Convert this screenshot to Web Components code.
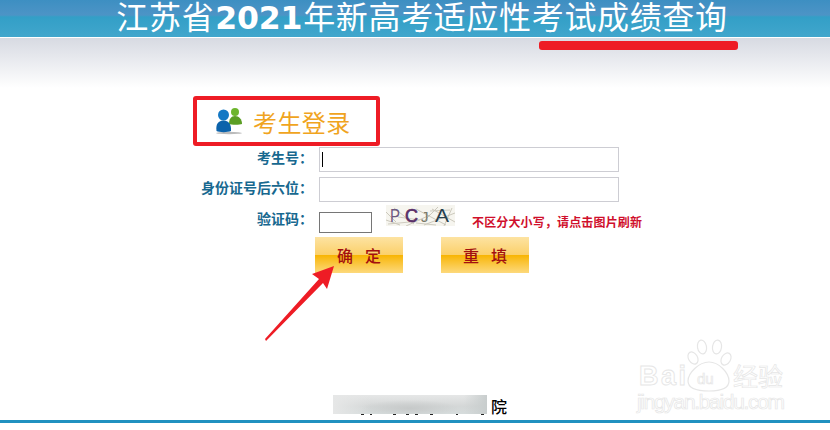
<!DOCTYPE html>
<html lang="zh">
<head>
<meta charset="utf-8">
<title>江苏省2021年新高考适应性考试成绩查询</title>
<style>
  html, body { margin: 0; padding: 0; background: #fff; }
  body { width: 830px; height: 430px; overflow: hidden; position: relative; font-family: "Noto Sans CJK SC", "Liberation Sans", sans-serif; }
</style>
</head>
<body>
<exam-header>江苏省<b>2021</b>年新高考适应性考试成绩查询</exam-header>
<login-panel>
  <login-row label="考生号：" width="300" focused></login-row>
  <login-row label="身份证号后六位：" width="300"></login-row>
  <login-row label="验证码：" width="53" captcha>
    <captcha-image></captcha-image>
    <span slot="hint">不区分大小写，请点击图片刷新</span>
  </login-row>
  <div slot="actions">
    <gold-button>确定</gold-button>
    <gold-button>重填</gold-button>
  </div>
</login-panel>
<page-footer>院</page-footer>
<baidu-mark></baidu-mark>
<red-marks></red-marks>

<script>
class ExamHeader extends HTMLElement {
  constructor() {
    super();
    this.attachShadow({ mode: 'open' }).innerHTML = `
<style>
  :host { display: block; }
  .bar {
    height: 37px;
    padding-left: 14px;
    box-sizing: border-box;
    display: flex;
    justify-content: center;
    align-items: center;
    background: linear-gradient(#3d8fc2 0, #4d94c6 15px, #339fc7 17px, #41a6cc 37px);
    color: #fff;
    font: 400 32px/37px "Liberation Sans", "Noto Sans CJK SC", sans-serif;
    letter-spacing: .65px;
    white-space: nowrap;
  }
  ::slotted(b) { font-family: "DejaVu Sans", sans-serif; font-weight: 700; font-size: 31.500px; margin: 0 1px; letter-spacing: -.2px; }
  .fade { height: 50px; margin-top: 1px; background: linear-gradient(#d7dae2, #fff); }
</style>
<div class="bar"><slot></slot></div>
<div class="fade"></div>`;
  }
}

class LoginPanel extends HTMLElement {
  constructor() {
    super();
    this.attachShadow({ mode: 'open' }).innerHTML = `
<style>
  :host { display: block; }
  .head {
    height: 40px;
    margin: 14px 0 0 214px;
    display: flex;
    align-items: center;
    gap: 9px;
    color: #f0a41e;
    font: 400 24px/32px "Noto Sans CJK SC", sans-serif;
    letter-spacing: .4px;
  }
  .head svg { display: block; margin-bottom: 4px; }
  .rows { margin-top: 5px; display: flex; flex-direction: column; gap: 5px; }
  .actions { margin-top: -1px; }
  ::slotted([slot="actions"]) { display: flex; gap: 38px; margin-left: 315px; }
</style>
<div class="head">
  <svg width="30" height="30" viewBox="0 0 30 30">
    <ellipse cx="15" cy="28" rx="13" ry="1.2" fill="#bbb"/>
    <circle cx="21" cy="7" r="4" fill="#6db52d"/>
    <path d="M15 19c0-5 2-8 6-8s7 3 7 8c-2 1-11 1-13 0z" fill="#5b9e24"/>
    <circle cx="9.5" cy="10" r="5.5" fill="#1478c4"/>
    <path d="M2.5 26c-1-7 2-10.500 7-10.500s8 3.500 7.500 10.500c-3 1.500-12 1.500-14.500 0z" fill="#0c63ab"/>
  </svg>
  <span>考生登录</span>
</div>
<div class="rows"><slot></slot></div>
<div class="actions"><slot name="actions"></slot></div>`;
  }
}

class LoginRow extends HTMLElement {
  constructor() {
    super();
    this.attachShadow({ mode: 'open' }).innerHTML = `
<style>
  :host { display: flex; align-items: center; }
  :host([captcha]) { margin-top: 5px; height: 26px; align-items: flex-start; }
  label {
    width: 313px;
    flex: none;
    padding-bottom: 3px;
    text-align: right;
    color: #17688f;
    font: 700 14px/16px "Liberation Sans", "Noto Sans CJK SC", sans-serif;
  }
  :host([captcha]) label { padding-bottom: 0; line-height: 20px; margin-top: -3px; }
  .field { position: relative; margin-left: 6px; flex: none; }
  input {
    display: block;
    box-sizing: border-box;
    height: 25px;
    padding: 0 2px;
    border: 1px solid #cdcdd3;
    background: #fff;
    outline: none;
  }
  :host([captcha]) input { height: 21px; border-color: #767676; }
  .caret { position: absolute; left: 3px; top: 5px; width: 1px; height: 15px; background: #000; display: none; }
  :host([focused]) .caret { display: block; }
  .extra { display: flex; align-items: flex-start; }
  ::slotted(captcha-image) { margin: -7px 0 0 14px; }
  ::slotted([slot="hint"]) {
    margin: 1px 0 0 17px;
    color: #d00f2c;
    font: 700 12px/18px "Noto Sans CJK SC", sans-serif;
    letter-spacing: .15px;
    white-space: nowrap;
  }
</style>
<label></label>
<div class="field"><input type="text"><i class="caret"></i></div>
<div class="extra"><slot></slot><slot name="hint"></slot></div>`;
  }

  connectedCallback() {
    this.shadowRoot.querySelector('label').textContent = this.getAttribute('label');
    this.shadowRoot.querySelector('input').style.width = this.getAttribute('width') + 'px';
  }
}

class CaptchaImage extends HTMLElement {
  constructor() {
    super();
    this.attachShadow({ mode: 'open' }).innerHTML = `
<style>
  :host { display: block; width: 69px; height: 21px; }
  svg { display: block; }
  text { font-family: "Liberation Sans", sans-serif; }
</style>
<svg width="69" height="21" viewBox="0 0 69 21">
  <rect width="69" height="21" fill="#f6f5ef"/>
  <path d="M0 15L14 20M8 3L28 19M20 21L44 10M30 4L60 20M38 20L69 8M46 4L69 17M0 7L10 17M52 2L38 16M58 21L66 3" stroke="#b9b5a6" stroke-width=".7" fill="none"/>
  <path d="M2 19L24 17M30 18L50 20M44 6L64 5M12 12L34 15" stroke="#cfccc0" fill="none"/>
  <text x="4" y="17" font-size="19" fill="#6d5a80" textLength="10" lengthAdjust="spacingAndGlyphs">P</text>
  <text x="19" y="17" font-size="19" fill="#5a2f68" stroke="#5a2f68" stroke-width=".7" textLength="13" lengthAdjust="spacingAndGlyphs">C</text>
  <text x="35" y="17" font-size="15" fill="#7a7a6a">J</text>
  <text x="49" y="17" font-size="19" fill="#27404f" textLength="14" lengthAdjust="spacingAndGlyphs">A</text>
</svg>`;
  }
}

class GoldButton extends HTMLElement {
  constructor() {
    super();
    this.attachShadow({ mode: 'open' }).innerHTML = `
<style>
  :host {
    display: flex;
    width: 88px;
    height: 36px;
    align-items: center;
    justify-content: center;
    background: linear-gradient(#fde3a2 0, #fbd06a 18px, #f8b400 18px, #f9bd20 22px, #fdd97c 36px);
    color: #a3100f;
    font: 500 16px/20px "Noto Sans CJK SC", sans-serif;
    letter-spacing: 12px;
    text-indent: 12px;
    cursor: pointer;
  }
</style>
<slot></slot>`;
  }
}

class PageFooter extends HTMLElement {
  constructor() {
    super();
    this.attachShadow({ mode: 'open' }).innerHTML = `
<style>
  :host { position: absolute; left: 0; right: 0; top: 395px; display: block; }
  .line { height: 25px; display: flex; }
  .mask { width: 154px; margin-left: 333px; }
  .blur {
    height: 19px;
    background:
      radial-gradient(ellipse at 50% 70%, #c6c9c9, transparent 45%),
      linear-gradient(90deg, #e6e7e7, transparent 25%, transparent 85%, #c8cdcd),
      linear-gradient(#e6e7e7, #d4d7d7 60%, #d6dcdc);
  }
  .bits {
    height: 1px;
    background: linear-gradient(90deg,
      transparent 28px, #222 28px 31px, transparent 31px 37px, #222 37px 39px,
      transparent 39px 60px, #222 60px 63px, transparent 63px 73px, #222 73px 76px,
      transparent 76px 82px, #222 82px 85px, transparent 85px 97px, #222 97px 100px,
      transparent 100px 123px, #222 123px 125px, transparent 125px 148px, #222 148px 151px,
      transparent 151px);
  }
  .tail { margin-left: 4px; color: #000; font: 500 16px/23px "Noto Sans CJK SC", sans-serif; }
  .rule { height: 3px; background: #2091c0; }
</style>
<div class="line">
  <div class="mask"><div class="blur"></div><div class="bits"></div></div>
  <div class="tail"><slot></slot></div>
</div>
<div class="rule"></div>`;
  }
}

class BaiduMark extends HTMLElement {
  constructor() {
    super();
    this.attachShadow({ mode: 'open' }).innerHTML = `
<style>
  :host { position: absolute; left: 630px; top: 330px; display: block; }
  svg { display: block; }
  text { fill: #fff; stroke: #e6e6e6; stroke-width: .9; font-family: "Liberation Sans", sans-serif; }
  .cjk { font-family: "Noto Sans CJK SC", sans-serif; }
  .thin { stroke-width: .7; }
  ellipse, path { fill: #fff; stroke: #e6e6e6; stroke-width: 1.2; }
</style>
<svg width="200" height="88" viewBox="0 0 200 88">
  <text x="9" y="55" font-size="27" font-weight="700" textLength="47">Bai</text>
  <ellipse cx="72" cy="17" rx="4.500" ry="7" transform="rotate(-10 72 17)"/>
  <ellipse cx="87" cy="17" rx="4.500" ry="7" transform="rotate(8 87 17)"/>
  <ellipse cx="63" cy="28" rx="4.500" ry="6.500" transform="rotate(-30 63 28)"/>
  <ellipse cx="96" cy="29" rx="4.500" ry="6.500" transform="rotate(30 96 29)"/>
  <path d="M79 32c10 0 20 11 20 19 0 8-9 10-20 10s-21-2-21-10c0-8 11-19 21-19z"/>
  <text x="67" y="54" font-size="15" class="thin">du</text>
  <text class="cjk thin" x="103" y="56" font-size="25">经验</text>
  <text class="thin" x="7" y="79" font-size="21" textLength="148">jingyan.baidu.com</text>
</svg>`;
  }
}

class RedMarks extends HTMLElement {
  constructor() {
    super();
    this.attachShadow({ mode: 'open' }).innerHTML = `
<style>
  :host { position: absolute; inset: 0; display: block; pointer-events: none; }
  .box { position: absolute; left: 193px; top: 96px; width: 187px; height: 50px; box-sizing: border-box; border: 4px solid #ee1c25; border-radius: 3px; }
  .under { position: absolute; left: 539px; top: 41px; width: 199px; height: 9px; border-radius: 3px; background: #ee1c25; }
  svg { position: absolute; left: 0; top: 0; }
</style>
<div class="box"></div>
<div class="under"></div>
<svg width="830" height="430" viewBox="0 0 830 430">
  <path d="M334 266L312 274L319 279L265 339L266 341L323 283L327 289z" fill="#ee1c25"/>
</svg>`;
  }
}

customElements.define('exam-header', ExamHeader);
customElements.define('login-panel', LoginPanel);
customElements.define('login-row', LoginRow);
customElements.define('captcha-image', CaptchaImage);
customElements.define('gold-button', GoldButton);
customElements.define('page-footer', PageFooter);
customElements.define('baidu-mark', BaiduMark);
customElements.define('red-marks', RedMarks);
</script>
</body>
</html>
